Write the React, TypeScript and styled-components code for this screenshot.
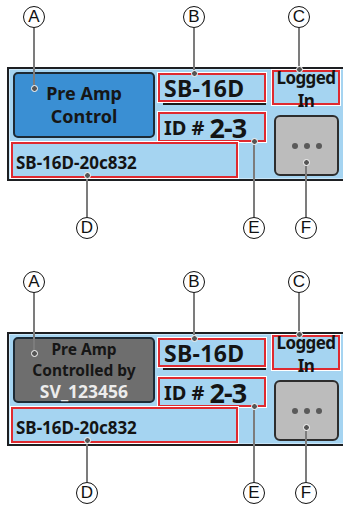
import styled, { createGlobalStyle } from "styled-components";

const GlobalStyle = createGlobalStyle`
  html, body {
    margin: 0;
    padding: 0;
    background: #ffffff;
    overflow: hidden;
  }
  body {
    font-family: "Noto Sans", "DejaVu Sans", sans-serif;
    color: #141414;
  }
`;

const Page = styled.div`
  width: 343px;
  height: 507px;
  display: flex;
  flex-direction: column;
`;

const Figure = styled.div`
  position: relative;
  height: 265px;
  flex-shrink: 0;
`;

const Panel = styled.div`
  margin: 67px 0 0 7px;
  width: 340px;
  height: 114px;
  box-sizing: border-box;
  padding: 1px 0 1px 2px;
  border: 2px solid #1d1f22;
  background: #a5d4f1;
  box-shadow: inset 0 0 0 1px #c9e6f8;
  display: grid;
  grid-template-columns: 144px 108px 74px;
  grid-template-rows: 35px 37px 36px;
  column-gap: 3px;
`;

const ModeButton = styled.div<{ $locked?: boolean }>`
  grid-column: 1;
  grid-row: 1 / 3;
  margin: 2px 0 4px 2px;
  border: 2px solid #1d2a35;
  border-radius: 5px;
  background: ${(p) => (p.$locked ? "#6e6e6e" : "#3a8fd3")};
  display: flex;
  flex-direction: column;
  align-items: center;
  justify-content: center;
  font-weight: 700;
  font-size: ${(p) => (p.$locked ? "15.5px" : "18px")};
  line-height: ${(p) => (p.$locked ? "21px" : "23px")};
  color: #161616;
  text-align: center;
`;

const Owner = styled.span`
  color: #ececec;
  font-size: 17.5px;
`;

const Mark = styled.div`
  box-sizing: border-box;
  border: 2px solid #df2a30;
  box-shadow: 0 0 0 1px #ffffff;
`;

const NameCell = styled.div`
  grid-column: 2;
  grid-row: 1;
  display: flex;
  flex-direction: column;
`;

const NameBox = styled(Mark)`
  margin-top: 3px;
  height: 29px;
  display: flex;
  align-items: center;
  padding-left: 4px;
  font-weight: 700;
  font-size: 23px;
  letter-spacing: 0.3px;
`;

const Rule = styled.div`
  margin: 1px 0 0 5px;
  height: 2px;
  background: #1a1a1a;
`;

const IdBox = styled(Mark)`
  grid-column: 2;
  grid-row: 2;
  margin-top: 7px;
  height: 30px;
  display: flex;
  align-items: center;
  gap: 5px;
  padding-left: 4px;
  font-weight: 700;
`;

const IdLabel = styled.span`
  font-size: 20px;
`;

const IdValue = styled.span`
  font-size: 27px;
  letter-spacing: -1px;
`;

const HostBox = styled(Mark)`
  grid-column: 1 / 3;
  grid-row: 3;
  width: 227px;
  height: 36px;
  display: flex;
  align-items: flex-end;
  padding: 0 0 2px 3px;
  font-weight: 700;
  font-size: 17px;
`;

const StatusBox = styled(Mark)`
  grid-column: 3;
  grid-row: 1;
  margin-left: 3px;
  width: 68px;
  height: 35px;
  display: flex;
  flex-direction: column;
  align-items: center;
  justify-content: flex-start;
  font-weight: 700;
  font-size: 17px;
  line-height: 23px;
  letter-spacing: -0.6px;
  & > span:first-child {
    margin-top: -6px;
  }
`;

const MoreButton = styled.div`
  grid-column: 3;
  grid-row: 2 / 4;
  margin: 10px 0 2px 5px;
  width: 65px;
  box-sizing: border-box;
  border: 2px solid #2d2d2d;
  border-radius: 6px;
  background: #bcbcbc;
  display: flex;
  align-items: center;
  justify-content: center;
  gap: 6px;
`;

const Dot = styled.span`
  width: 6px;
  height: 6px;
  border-radius: 50%;
  background: #5a5a5a;
`;

const Pin = styled.div<{ $x: number; $top: number }>`
  position: absolute;
  left: ${(p) => p.$x - 11}px;
  top: ${(p) => p.$top}px;
  width: 22px;
  display: flex;
  flex-direction: column;
  align-items: center;
`;

const Badge = styled.div`
  width: 22px;
  height: 22px;
  box-sizing: border-box;
  border: 1.3px solid #111;
  border-radius: 50%;
  background: #fff;
  display: flex;
  align-items: center;
  justify-content: center;
  font-family: "Liberation Sans", sans-serif;
  font-size: 17px;
  color: #111;
`;

const Stem = styled.div<{ $len: number }>`
  width: 2px;
  height: ${(p) => p.$len}px;
  background: #7c7c7c;
`;

const Tip = styled.div`
  width: 5px;
  height: 5px;
  border-radius: 50%;
  background: #555;
  border: 1.5px solid #fff;
  flex-shrink: 0;
`;

function TopPin({ x, y, label }: { x: number; y: number; label: string }) {
  return (
    <Pin $x={x} $top={6}>
      <Badge>{label}</Badge>
      <Stem $len={y - 32} />
      <Tip />
    </Pin>
  );
}

function BottomPin({ x, y, label }: { x: number; y: number; label: string }) {
  return (
    <Pin $x={x} $top={y - 4}>
      <Tip />
      <Stem $len={218 - y - 4} />
      <Badge>{label}</Badge>
    </Pin>
  );
}

function UnitFigure({ locked }: { locked?: boolean }) {
  return (
    <Figure>
      <Panel>
        {locked ? (
          <ModeButton $locked>
            <span>Pre Amp</span>
            <span>Controlled by</span>
            <Owner>SV_123456</Owner>
          </ModeButton>
        ) : (
          <ModeButton>
            <span>Pre Amp</span>
            <span>Control</span>
          </ModeButton>
        )}
        <NameCell>
          <NameBox>SB-16D</NameBox>
          <Rule />
        </NameCell>
        <IdBox>
          <IdLabel>ID #</IdLabel>
          <IdValue>2-3</IdValue>
        </IdBox>
        <HostBox>SB-16D-20c832</HostBox>
        <StatusBox>
          <span>Logged</span>
          <span>In</span>
        </StatusBox>
        <MoreButton>
          <Dot />
          <Dot />
          <Dot />
        </MoreButton>
      </Panel>
      <TopPin x={34} y={89} label="A" />
      <TopPin x={194} y={74} label="B" />
      <TopPin x={299} y={70} label="C" />
      <BottomPin x={87} y={176} label="D" />
      <BottomPin x={254} y={142} label="E" />
      <BottomPin x={306} y={163} label="F" />
    </Figure>
  );
}

export default function App() {
  return (
    <Page>
      <GlobalStyle />
      <UnitFigure />
      <UnitFigure locked />
    </Page>
  );
}
